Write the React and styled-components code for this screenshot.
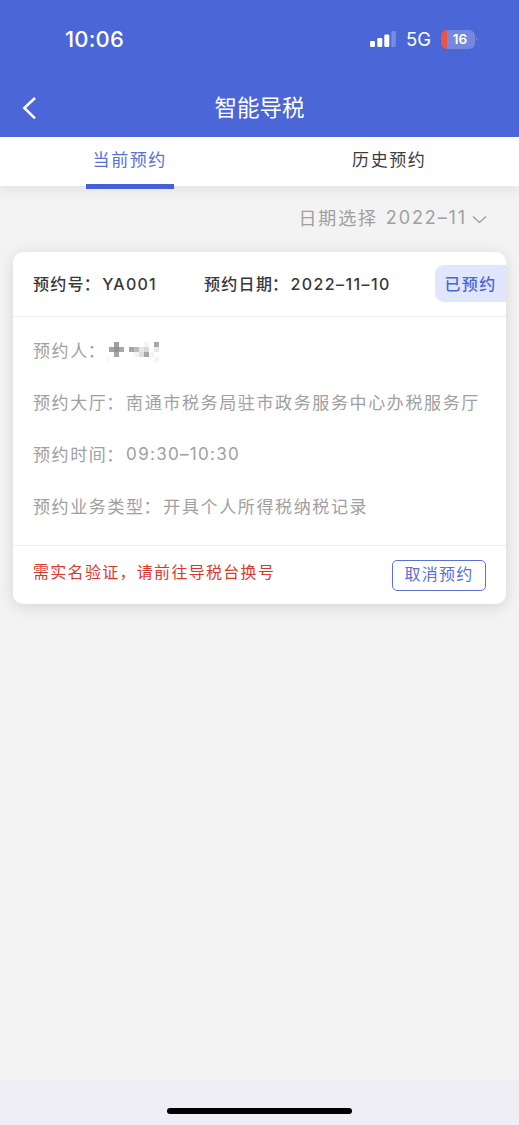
import React from 'react';
import styled, { createGlobalStyle } from 'styled-components';

const Global = createGlobalStyle`
  *, *::before, *::after { box-sizing: border-box; }
  body {
    margin: 0;
    background: #f3f3f3;
    font-family: "Noto Sans CJK SC", sans-serif;
  }
  button { font-family: inherit; background: none; border: 0; margin: 0; padding: 0; }
`;

const Screen = styled.div`
  display: flex;
  flex-direction: column;
  height: 1125px;
  overflow: hidden;
  background: #f3f3f3;
`;

const Header = styled.header`
  position: relative;
  z-index: 2;
  height: 137px;
  flex: none;
  background: #4b66d6;
  color: #fff;
`;

const StatusBar = styled.div`
  display: flex;
  justify-content: space-between;
  align-items: center;
  height: 78px;
  padding: 0 41px 0 65px;
  font-family: Inter, sans-serif;
`;

const Clock = styled.span`
  font-size: 22px;
  font-weight: 500;
  letter-spacing: 0.2px;
  line-height: 28px;
`;

const StatusIcons = styled.div`
  display: flex;
  align-items: center;
`;

const Network = styled.span`
  margin: 0 10px 1px 10px;
  font-size: 18.5px;
  line-height: 22px;
`;

const Battery = styled.span`
  display: flex;
  align-items: center;
  justify-content: center;
  width: 34px;
  height: 19px;
  padding-left: 4px;
  border-radius: 6px;
  background: linear-gradient(90deg, #ea5547 6px, #7488df 6px);
  font-size: 13.5px;
  font-weight: 600;
`;

const TitleBar = styled.div`
  display: grid;
  grid-template-columns: 60px 1fr 60px;
  align-items: center;
  height: 59px;
`;

const BackButton = styled.button`
  display: flex;
  padding-left: 21px;
`;

const Title = styled.h1`
  margin: 0;
  padding-bottom: 3px;
  text-align: center;
  font-size: 22.5px;
  font-weight: 400;
  line-height: 32px;
`;

const Tabs = styled.nav`
  position: relative;
  z-index: 1;
  display: grid;
  grid-template-columns: 1fr 1fr;
  height: 49px;
  flex: none;
  background: #fff;
  box-shadow: 0 2px 14px rgba(0, 0, 0, 0.09);
`;

const Tab = styled.button`
  position: relative;
  padding-bottom: 7px;
  color: ${(p) => (p.$active ? '#5670d9' : '#3c3c3c')};
  font-size: 17px;
  letter-spacing: 1.6px;
  &::after {
    content: '';
    display: ${(p) => (p.$active ? 'block' : 'none')};
    position: absolute;
    left: 86px;
    bottom: -3px;
    width: 88px;
    height: 5px;
    background: #4360da;
  }
`;

const DateFilter = styled.div`
  display: flex;
  align-items: center;
  justify-content: flex-end;
  height: 66px;
  flex: none;
  padding: 0 32px 4px 0;
  color: #a0a0a0;
  font-size: 18px;
  letter-spacing: 1.8px;
`;

const Digits = styled.span`
  font-family: Inter, sans-serif;
  font-weight: ${(p) => p.$weight || 400};
  letter-spacing: ${(p) => p.$spacing}px;
`;

const Month = styled(Digits)`
  margin: 0 5px 0 8px;
`;

const Chevron = styled.svg`
  margin-top: 4px;
`;

const Card = styled.article`
  width: 493px;
  height: 352px;
  margin-left: 13px;
  border-radius: 10px;
  background: #fff;
  box-shadow: 0 3px 16px rgba(0, 0, 0, 0.12);
`;

const CardHead = styled.div`
  display: flex;
  align-items: center;
  height: 65px;
  padding: 0 0 2px 20px;
  border-bottom: 1px solid #eee;
  color: #383838;
  font-size: 16px;
  font-weight: 500;
  letter-spacing: 1.3px;
  white-space: nowrap;
`;

const HeadItem = styled.span`
  width: ${(p) => p.$width}px;
`;

const Colon = styled.span`
  margin: 0 1.2px 0 -1.2px;
`;

const Status = styled.span`
  display: flex;
  align-items: center;
  justify-content: center;
  width: 71px;
  height: 37px;
  margin-left: auto;
  border-radius: 9px 0 0 9px;
  background: #e0e6fb;
  color: #4b66d6;
`;

const Details = styled.div`
  height: 229px;
  padding: 6px 20px 0;
  border-bottom: 1px solid #eee;
`;

const Row = styled.div`
  display: flex;
  align-items: center;
  height: 52px;
  color: #a0a0a0;
  font-size: 17px;
  letter-spacing: 1.62px;
  white-space: nowrap;
`;

const Period = styled(Digits)`
  padding-top: 1px;
`;

const Mosaic = styled.svg`
  margin: 2px 0 0 -3px;
`;

const CardFoot = styled.div`
  display: flex;
  align-items: flex-start;
  justify-content: space-between;
  padding: 14px 20px 0 20px;
`;

const Notice = styled.span`
  color: #d8392f;
  font-size: 16px;
  line-height: 22px;
  letter-spacing: 1.3px;
`;

const CancelButton = styled.button`
  width: 94px;
  height: 31px;
  padding-bottom: 4px;
  border: 1.5px solid #5a72d8;
  border-radius: 5px;
  color: #5670d9;
  font-size: 16px;
  line-height: 23px;
  letter-spacing: 1.2px;
`;

const HomeArea = styled.footer`
  display: flex;
  justify-content: center;
  height: 45px;
  margin-top: auto;
  padding-top: 28px;
  background: #efeef4;
`;

const HomeIndicator = styled.div`
  width: 185px;
  height: 6px;
  border-radius: 3px;
  background: #000;
`;

const mosaicCells = [
  [9, 5, '#a0a0a0'], [4, 10, '#a3a3a3'], [9, 10, '#939393'], [14, 10, '#a8a8a8'], [9, 15, '#a5a5a5'],
  [24, 10, '#a5a5a5'], [29, 10, '#bcbcbc'], [34, 10, '#e5e5e5'], [39, 10, '#dadada'],
  [29, 15, '#f4f4f4'], [34, 15, '#dedede'], [39, 15, '#a5a5a5'], [39, 5, '#f5f5f5'],
  [49, 5, '#a8a8a8'], [49, 10, '#e8e8e8'], [49, 20, '#f5f5f5'], [44, 15, '#f5f5f5'], [0, 20, '#fafafa'],
];

export default function App() {
  return (
    <Screen lang="zh-CN">
      <Global />
      <Header>
        <StatusBar>
          <Clock>10:06</Clock>
          <StatusIcons>
            <svg width="26" height="18" viewBox="0 0 26 18" fill="#fff">
              <rect x="0" y="11" width="5" height="6" rx="1.3" />
              <rect x="7.3" y="8" width="5" height="9" rx="1.3" />
              <rect x="14.3" y="4.5" width="5" height="12.5" rx="1.3" />
              <rect x="21.3" y="1" width="4.5" height="16" rx="1.3" opacity=".25" />
            </svg>
            <Network>5G</Network>
            <Battery>16</Battery>
            <svg width="3" height="6" viewBox="0 0 3 6">
              <path d="M1 1Q4 3 1 5Z" fill="#7488df" />
            </svg>
          </StatusIcons>
        </StatusBar>
        <TitleBar>
          <BackButton>
            <svg width="17" height="26" viewBox="0 0 17 26" fill="none" stroke="#fff" strokeWidth="2.5">
              <path d="M14 3L3.3 13L14 23.3" />
            </svg>
          </BackButton>
          <Title>智能导税</Title>
        </TitleBar>
      </Header>
      <Tabs>
        <Tab $active>当前预约</Tab>
        <Tab>历史预约</Tab>
      </Tabs>
      <DateFilter>
        日期选择
        <Month $spacing={1.9}>2022–11</Month>
        <Chevron width="15" height="10" viewBox="0 0 15 10" fill="none" stroke="#999" strokeWidth="1.2">
          <path d="M1 2.5L7.5 8.5L14 2.5" />
        </Chevron>
      </DateFilter>
      <Card>
        <CardHead>
          <HeadItem $width={171}>预约号<Colon>：</Colon><Digits $weight={500} $spacing={1.2}>YA001</Digits></HeadItem>
          <HeadItem $width={200}>预约日期<Colon>：</Colon><Digits $weight={500} $spacing={1.4}>2022–11–10</Digits></HeadItem>
          <Status>已预约</Status>
        </CardHead>
        <Details>
          <Row>
            预约人<Colon>：</Colon>
            <Mosaic width="56" height="26" viewBox="0 0 56 26" shapeRendering="crispEdges">
              {mosaicCells.map(([x, y, fill]) => (
                <rect key={`${x}-${y}`} x={x} y={y} width="5" height="5" fill={fill} />
              ))}
            </Mosaic>
          </Row>
          <Row>预约大厅<Colon>：</Colon>南通市税务局驻市政务服务中心办税服务厅</Row>
          <Row>预约时间<Colon>：</Colon><Period $spacing={1.3}>09:30–10:30</Period></Row>
          <Row>预约业务类型<Colon>：</Colon>开具个人所得税纳税记录</Row>
        </Details>
        <CardFoot>
          <Notice>需实名验证，请前往导税台换号</Notice>
          <CancelButton>取消预约</CancelButton>
        </CardFoot>
      </Card>
      <HomeArea>
        <HomeIndicator />
      </HomeArea>
    </Screen>
  );
}
